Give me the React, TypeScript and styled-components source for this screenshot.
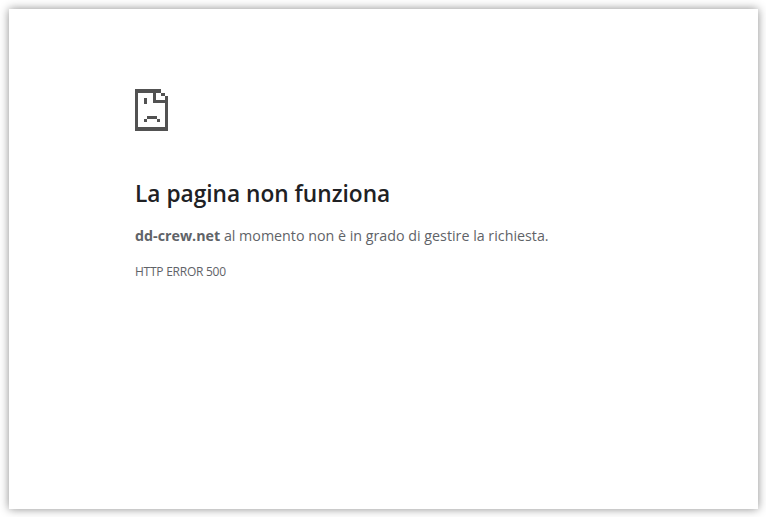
import React from "react";
import styled, { createGlobalStyle } from "styled-components";

const GlobalStyle = createGlobalStyle`
  html, body {
    margin: 0;
    height: 100%;
    background: #fff;
  }
`;

const Backdrop = styled.div`
  box-sizing: border-box;
  width: 766px;
  height: 517px;
  padding: 9px 8px 8px 9px;
  background: #fff;
  overflow: hidden;
`;

const Page = styled.main`
  box-sizing: border-box;
  height: 100%;
  padding: 80px 126px 0;
  background: #fff;
  box-shadow: 0 0 9px rgba(0, 0, 0, 0.45);
  font-family: "Open Sans", "Noto Sans", sans-serif;
`;

const Icon = styled.svg`
  display: block;
  width: 33px;
  height: 42px;
  color: #525252;
`;

const Title = styled.h1`
  margin: 47px 0 0;
  font-size: 22.7px;
  line-height: 32px;
  font-weight: 600;
  letter-spacing: 0;
  color: #202124;
`;

const Message = styled.p`
  margin: 16px 0 0;
  font-size: 14.27px;
  line-height: 20px;
  color: #5f6368;

  strong {
    font-weight: 700;
  }
`;

const ErrorCode = styled.div`
  margin: 18px 0 0;
  font-size: 12px;
  line-height: 16px;
  letter-spacing: -0.25px;
  color: #5f6368;
`;

const SadPageIcon = () => (
  <Icon viewBox="0 0 100 126" aria-hidden="true">
    <path
      fill="currentColor"
      shapeRendering="crispEdges"
      d="M0 0H80V10H65V33H100V126H0ZM10 10V116H90V43H55V10ZM80 10H90V20H80ZM90 20H100V33H90ZM27 26H37V46H27ZM37 80H67V90H37ZM27 90H37V100H27ZM67 90H77V100H67Z"
    />
  </Icon>
);

export default function App() {
  return (
    <Backdrop>
      <GlobalStyle />
      <Page>
        <SadPageIcon />
        <Title>La pagina non funziona</Title>
        <Message>
          <strong>dd-crew.net</strong> al momento non è in grado di gestire la richiesta.
        </Message>
        <ErrorCode>HTTP ERROR 500</ErrorCode>
      </Page>
    </Backdrop>
  );
}
